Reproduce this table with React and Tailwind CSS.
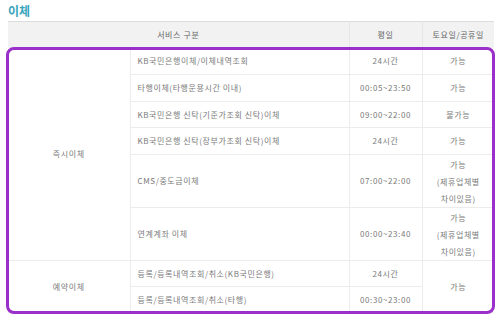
const rows = [
  { name: "KB국민은행이체/이체내역조회", weekday: "24시간", holiday: "가능", h: "h-[27px]" },
  { name: "타행이체(타행운용시간 이내)", weekday: "00:05~23:50", holiday: "가능", h: "h-[27px]" },
  { name: "KB국민은행 신탁(기준가조회 신탁)이체", weekday: "09:00~22:00", holiday: "불가능", h: "h-[26px]" },
  { name: "KB국민은행 신탁(장부가조회 신탁)이체", weekday: "24시간", holiday: "가능", h: "h-[27px]" },
  { name: "CMS/중도금이체", weekday: "07:00~22:00", holiday: ["가능", "(제휴업체별", "차이있음)"], h: "h-[53px]" },
  { name: "연계계좌 이체", weekday: "00:00~23:40", holiday: ["가능", "(제휴업체별", "차이있음)"], h: "h-[53px]" },
];

const cell = "border-b border-l border-[#ececec] text-center";

function Holiday({ value }) {
  if (Array.isArray(value)) {
    return (
      <div className="leading-[17px]">
        {value.map((line) => (
          <div key={line}>{line}</div>
        ))}
      </div>
    );
  }
  return value;
}

export default function App() {
  return (
    <div className="w-[503px] h-[315px] bg-white overflow-hidden text-[#7a7a7a] font-['Noto_Sans_CJK_KR','Noto_Sans',sans-serif] text-[8px] tracking-[0.6px]">
      <h2 className="pl-[8px] pt-[3px] h-[21px] text-[12px] font-bold text-[#37a5bb] leading-[16px] tracking-normal">
        이체
      </h2>

      <div className="relative ml-[8px] w-[486px]">
        <table className="w-full border-collapse table-fixed border-t border-[#dcdcdc]">
          <colgroup>
            <col className="w-[122px]" />
            <col className="w-[219px]" />
            <col className="w-[73px]" />
            <col className="w-[72px]" />
          </colgroup>
          <thead>
            <tr className="h-[26px] bg-[#f2f2f2] text-[#666]">
              <th colSpan={2} className="font-normal text-center">서비스 구분</th>
              <th className="font-normal border-l border-[#e6e6e6]">평일</th>
              <th className="font-normal border-l border-[#e6e6e6]">토요일/공휴일</th>
            </tr>
          </thead>
          <tbody>
            {rows.map((r, i) => (
              <tr key={r.name} className={r.h}>
                {i === 0 && (
                  <td rowSpan={6} className="border-b border-[#ececec] text-center">
                    즉시이체
                  </td>
                )}
                <td className="border-b border-l border-[#ececec] pl-[7px]">{r.name}</td>
                <td className={cell}>{r.weekday}</td>
                <td className={cell}>
                  <Holiday value={r.holiday} />
                </td>
              </tr>
            ))}
            <tr className="h-[26px]">
              <td rowSpan={2} className="border-b border-[#ececec] text-center">
                예약이체
              </td>
              <td className="border-b border-l border-[#ececec] pl-[7px]">
                등록/등록내역조회/취소(KB국민은행)
              </td>
              <td className={cell}>24시간</td>
              <td rowSpan={2} className={cell}>가능</td>
            </tr>
            <tr className="h-[26px]">
              <td className="border-b border-l border-[#ececec] pl-[7px]">
                등록/등록내역조회/취소(타행)
              </td>
              <td className={cell}>00:30~23:00</td>
            </tr>
          </tbody>
        </table>

        {/* highlight frame drawn over the body rows */}
        <div className="absolute left-[-2px] top-[26px] w-[489px] h-[267px] border-[3px] border-[#9a30c9] rounded-[8px] pointer-events-none" />
      </div>
    </div>
  );
}
